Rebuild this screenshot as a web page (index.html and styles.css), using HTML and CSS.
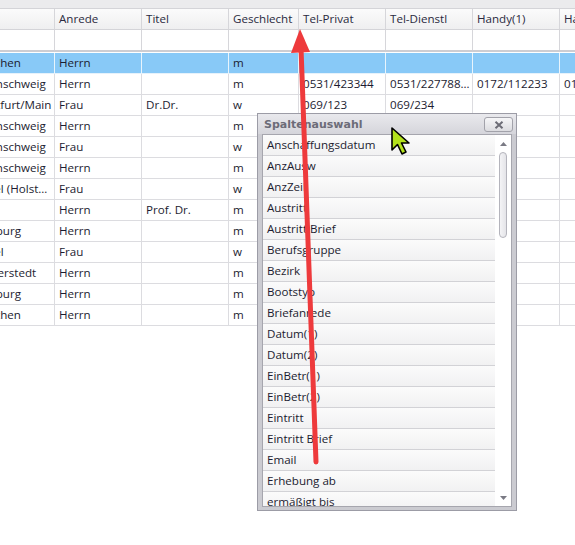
FILE: index.html
```html
<!DOCTYPE html>
<html lang="de">
<head>
<meta charset="utf-8">
<title>Spaltenauswahl</title>
<link rel="stylesheet" href="styles.css">
</head>
<body>
<div class="page">
  <div class="grid">
    <div class="topstrip"></div>
    <div class="row head">
      <div class="c w0">Ort</div><div class="c w1">Anrede</div><div class="c w1">Titel</div><div class="c w3">Geschlecht</div><div class="c w1">Tel-Privat</div><div class="c w1">Tel-Dienstl</div><div class="c w1">Handy(1)</div><div class="c w1">Handy(2)</div>
    </div>
    <div class="row filter">
      <div class="c w0"></div><div class="c w1"></div><div class="c w1"></div><div class="c w3"></div><div class="c w1"></div><div class="c w1"></div><div class="c w1"></div><div class="c w1"></div>
    </div>
    <div class="gap"></div>
    <div class="row data sel">
      <div class="c w0">München</div><div class="c w1">Herrn</div><div class="c w1"></div><div class="c w3">m</div><div class="c w1"></div><div class="c w1"></div><div class="c w1"></div><div class="c w1"></div>
    </div>
    <div class="row data">
      <div class="c w0">Braunschweig</div><div class="c w1">Herrn</div><div class="c w1"></div><div class="c w3">m</div><div class="c w1">0531/423344</div><div class="c w1">0531/22778899</div><div class="c w1">0172/112233</div><div class="c w1">0171/998877</div>
    </div>
    <div class="row data">
      <div class="c w0">Frankfurt/Main</div><div class="c w1">Frau</div><div class="c w1">Dr.Dr.</div><div class="c w3">w</div><div class="c w1">069/123</div><div class="c w1">069/234</div><div class="c w1"></div><div class="c w1"></div>
    </div>
    <div class="row data">
      <div class="c w0">Braunschweig</div><div class="c w1">Herrn</div><div class="c w1"></div><div class="c w3">m</div><div class="c w1"></div><div class="c w1"></div><div class="c w1"></div><div class="c w1"></div>
    </div>
    <div class="row data">
      <div class="c w0">Braunschweig</div><div class="c w1">Frau</div><div class="c w1"></div><div class="c w3">w</div><div class="c w1"></div><div class="c w1"></div><div class="c w1"></div><div class="c w1"></div>
    </div>
    <div class="row data">
      <div class="c w0">Braunschweig</div><div class="c w1">Herrn</div><div class="c w1"></div><div class="c w3">m</div><div class="c w1"></div><div class="c w1"></div><div class="c w1"></div><div class="c w1"></div>
    </div>
    <div class="row data">
      <div class="c w0">Wedel (Holstein)</div><div class="c w1">Frau</div><div class="c w1"></div><div class="c w3">w</div><div class="c w1"></div><div class="c w1"></div><div class="c w1"></div><div class="c w1"></div>
    </div>
    <div class="row data">
      <div class="c w0"></div><div class="c w1">Herrn</div><div class="c w1">Prof. Dr.</div><div class="c w3">m</div><div class="c w1"></div><div class="c w1"></div><div class="c w1"></div><div class="c w1"></div>
    </div>
    <div class="row data">
      <div class="c w0">Hamburg</div><div class="c w1">Herrn</div><div class="c w1"></div><div class="c w3">m</div><div class="c w1"></div><div class="c w1"></div><div class="c w1"></div><div class="c w1"></div>
    </div>
    <div class="row data">
      <div class="c w0">Wedel</div><div class="c w1">Frau</div><div class="c w1"></div><div class="c w3">w</div><div class="c w1"></div><div class="c w1"></div><div class="c w1"></div><div class="c w1"></div>
    </div>
    <div class="row data">
      <div class="c w0">Norderstedt</div><div class="c w1">Herrn</div><div class="c w1"></div><div class="c w3">m</div><div class="c w1"></div><div class="c w1"></div><div class="c w1"></div><div class="c w1"></div>
    </div>
    <div class="row data">
      <div class="c w0">Hamburg</div><div class="c w1">Herrn</div><div class="c w1"></div><div class="c w3">m</div><div class="c w1"></div><div class="c w1"></div><div class="c w1"></div><div class="c w1"></div>
    </div>
    <div class="row data">
      <div class="c w0">München</div><div class="c w1">Herrn</div><div class="c w1"></div><div class="c w3">m</div><div class="c w1"></div><div class="c w1"></div><div class="c w1"></div><div class="c w1"></div>
    </div>
  </div>

  <div class="dialog">
    <div class="titlebar">
      <span class="title">Spaltenauswahl</span>
      <span class="close"><svg width="10" height="8" viewBox="0 0 10 8"><path d="M1.5 0.8 L8.5 7.2 M8.5 0.8 L1.5 7.2" stroke="#6c6c76" stroke-width="2"/></svg></span>
    </div>
    <div class="listframe">
      <div class="items">
        <div class="item">Anschaffungsdatum</div>
        <div class="item">AnzAusw</div>
        <div class="item">AnzZeil</div>
        <div class="item">Austritt</div>
        <div class="item">Austritt Brief</div>
        <div class="item">Berufsgruppe</div>
        <div class="item">Bezirk</div>
        <div class="item">Bootstyp</div>
        <div class="item">Briefanrede</div>
        <div class="item">Datum(1)</div>
        <div class="item">Datum(2)</div>
        <div class="item">EinBetr(1)</div>
        <div class="item">EinBetr(2)</div>
        <div class="item">Eintritt</div>
        <div class="item">Eintritt Brief</div>
        <div class="item">Email</div>
        <div class="item">Erhebung ab</div>
        <div class="item">ermäßigt bis</div>
      </div>
      <div class="scroll">
        <svg class="sarrow" width="7" height="4" viewBox="0 0 7 4"><path d="M0 4 L3.5 0 L7 4 Z" fill="#7a7a84"/></svg>
        <div class="thumb"></div>
        <div class="track"></div>
        <svg class="sarrow" width="7" height="4" viewBox="0 0 7 4"><path d="M0 0 L7 0 L3.5 4 Z" fill="#7a7a84"/></svg>
      </div>
    </div>
  </div>

  <svg class="arrow" width="575" height="545" viewBox="0 0 575 545">
    <line x1="316" y1="462" x2="301" y2="48" stroke="#ee3a3c" stroke-width="5" stroke-linecap="round"/>
    <polygon points="300,29 291,53 310,52" fill="#ee3a3c"/>
  </svg>

  <svg class="cursor" width="24" height="32" viewBox="0 0 24 32">
    <path d="M1 1 L1 23 L6.5 17.5 L11 27 L15 25 L10.5 16 L18 16 Z" fill="#b3e21c" stroke="#000" stroke-width="1.6" stroke-linejoin="round"/>
  </svg>
</div>
</body>
</html>
```

FILE: styles.css
```css
html, body {
  margin: 0;
  padding: 0;
  background: #ffffff;
}
body {
  width: 575px;
  height: 545px;
  overflow: hidden;
  font-family: "Open Sans", "Liberation Sans", sans-serif;
  font-size: 11.6px;
  color: #1c1c30;
}
.page {
  position: relative;
  width: 575px;
  height: 545px;
  overflow: hidden;
}
.grid {
  margin-left: -34px;
  width: 720px;
}
.topstrip {
  height: 8px;
  background: #ebebed;
}
.row {
  display: flex;
}
.c {
  flex: none;
  box-sizing: border-box;
  border-right: 1px solid #d6d6da;
  padding: 0 2px 0 4px;
  height: 20px;
  line-height: 20px;
  white-space: nowrap;
  overflow: hidden;
  text-overflow: ellipsis;
}
.w0 { width: 89px; }
.w1 { width: 87px; }
.w3 { width: 70px; }

.head {
  border-top: 1px solid #d4d4d8;
  border-bottom: 1px solid #d4d4d8;
  background: linear-gradient(#fbfbfb, #efeff0);
  color: #2a2a40;
}
.filter {
  background: #ffffff;
  border-bottom: 2px solid #cdcdd2;
}
.gap {
  height: 1px;
  background: #ffffff;
}
.data {
  border-bottom: 1px solid #dcdce0;
}
.data .c {
  border-right-color: #dcdce0;
}
.sel {
  background: #88c9f7;
  border-bottom-color: #e6f2fb;
}
.sel .c {
  border-right-color: #e8f4fc;
}

.dialog {
  position: absolute;
  left: 257px;
  top: 113px;
  width: 260px;
  height: 398px;
  box-sizing: border-box;
  border: 1px solid #9c9ca6;
  background: #cbcbd1;
  display: flex;
  flex-direction: column;
  padding: 0 4px 3px 4px;
}
.titlebar {
  height: 20px;
  margin: 0 -4px;
  padding: 0 3px 0 6px;
  background: linear-gradient(#e9e9ed, #d5d5db);
  display: flex;
  align-items: center;
  justify-content: space-between;
}
.title {
  font-family: "DejaVu Sans", sans-serif;
  font-weight: bold;
  font-size: 11px;
  color: #6c6c78;
}
.close {
  width: 27px;
  height: 13px;
  border: 1px solid #a2a2aa;
  border-radius: 3px;
  background: linear-gradient(#f6f6f8, #dcdce0);
  display: flex;
  align-items: center;
  justify-content: center;
  margin-top: 1px;
}
.listframe {
  flex: 1;
  display: flex;
  border: 1px solid #a6a6ae;
  background: #ffffff;
  overflow: hidden;
}
.items {
  flex: 1;
  overflow: hidden;
}
.item {
  height: 20px;
  line-height: 20px;
  padding-left: 4px;
  border-bottom: 1px solid #d2d2d6;
  background: linear-gradient(#fbfbfb, #f1f1f2);
  white-space: nowrap;
  color: #1c1c30;
}
.scroll {
  width: 16px;
  flex: none;
  display: flex;
  flex-direction: column;
  align-items: center;
  padding: 7px 0 6px 0;
  box-sizing: border-box;
  background: #ffffff;
}
.sarrow {
  display: block;
  flex: none;
}
.thumb {
  margin-top: 6px;
  width: 6px;
  height: 84px;
  border: 1px solid #b4b4bc;
  border-radius: 4px;
  background: linear-gradient(90deg, #f4f4f6, #e4e4e8);
  flex: none;
}
.track {
  flex: 1;
}

.arrow {
  position: absolute;
  left: 0;
  top: 0;
  pointer-events: none;
}
.cursor {
  position: absolute;
  left: 391px;
  top: 127px;
  pointer-events: none;
}
```
